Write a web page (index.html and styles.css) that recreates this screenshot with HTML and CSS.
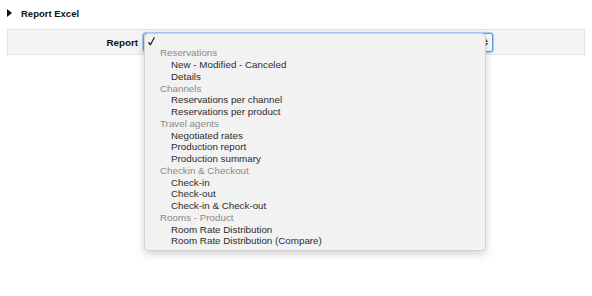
FILE: index.html
```html
<!DOCTYPE html>
<html>
<head>
<meta charset="utf-8">
<link rel="stylesheet" href="styles.css">
</head>
<body>
<div class="header">
  <span class="tri"></span>
  <span class="title">Report Excel</span>
</div>
<div class="row">
  <div class="label">Report</div>
  <div class="select-wrap">
    <div class="select">
      <span class="arrows"><span class="up"></span><span class="down"></span></span>
    </div>
    <div class="menu">
      <div class="line check"><svg class="tick" width="7" height="9" viewBox="0 0 7 9"><path d="M0.8 5.6 L2.4 7.8 L6.2 0.8" fill="none" stroke="#222" stroke-width="1.3" stroke-linecap="round" stroke-linejoin="round"/></svg></div>
      <div class="line group">Reservations</div>
      <div class="line item">New - Modified - Canceled</div>
      <div class="line item">Details</div>
      <div class="line group">Channels</div>
      <div class="line item">Reservations per channel</div>
      <div class="line item">Reservations per product</div>
      <div class="line group">Travel agents</div>
      <div class="line item">Negotiated rates</div>
      <div class="line item">Production report</div>
      <div class="line item">Production summary</div>
      <div class="line group">Checkin &amp; Checkout</div>
      <div class="line item">Check-in</div>
      <div class="line item">Check-out</div>
      <div class="line item">Check-in &amp; Check-out</div>
      <div class="line group">Rooms - Product</div>
      <div class="line item">Room Rate Distribution</div>
      <div class="line item">Room Rate Distribution (Compare)</div>
    </div>
  </div>
</div>
</body>
</html>
```
FILE: styles.css
```css
* { box-sizing: border-box; }
html, body { margin: 0; padding: 0; background: #fff; }
body {
  font-family: "Liberation Sans", Arial, sans-serif;
  color: #222;
  width: 592px;
  height: 296px;
  overflow: hidden;
}
.header {
  height: 26px;
  display: flex;
  align-items: center;
  padding: 0 7px;
}
.tri {
  width: 0;
  height: 0;
  border-top: 4px solid transparent;
  border-bottom: 4px solid transparent;
  border-left: 5px solid #111;
}
.title {
  margin-left: 9px;
  font-weight: bold;
  font-size: 9.5px;
  color: #111;
}
.row {
  margin: 3px 7px 0 7px;
  width: 578px;
  height: 26px;
  border: 1px solid #e2e2e2;
  background: #f4f4f4;
  display: flex;
  align-items: center;
}
.label {
  width: 130px;
  text-align: right;
  font-weight: bold;
  font-size: 9.8px;
  color: #111;
}
.select-wrap {
  position: relative;
  margin-left: 5px;
  width: 350px;
  height: 19px;
}
.select {
  width: 100%;
  height: 100%;
  background: #fbfbfb;
  border: 1px solid #5e9ff0;
  box-shadow: 0 0 0 1px #a8cbf7;
  border-radius: 3px;
  display: flex;
  align-items: center;
  justify-content: flex-end;
  padding-right: 4px;
}
.arrows {
  display: flex;
  flex-direction: column;
  gap: 1px;
}
.up, .down {
  width: 0;
  height: 0;
  border-left: 2px solid transparent;
  border-right: 2px solid transparent;
}
.up { border-bottom: 3px solid #333; }
.down { border-top: 3px solid #333; }
.menu {
  position: absolute;
  left: 1px;
  top: 0;
  width: 342px;
  background: #f2f2f2;
  border: 1px solid #d2d2d2;
  border-radius: 4px;
  box-shadow: 0 3px 9px rgba(0,0,0,0.18);
  padding: 2px 0 3px 0;
}
.line {
  height: 11.76px;
  line-height: 11.76px;
  font-size: 9.8px;
  white-space: nowrap;
}
.check {
  padding-left: 3px;
  display: flex;
  align-items: center;
}
.tick { display: block; }
.group {
  padding-left: 15px;
  color: #8a8a8a;
}
.item {
  padding-left: 26px;
  color: #2c2c2c;
}
```
